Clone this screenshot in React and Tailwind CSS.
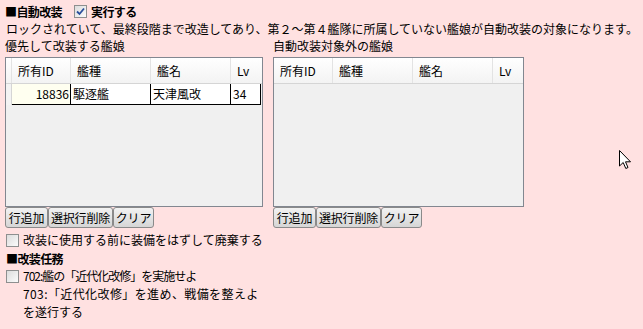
// App.jsx
// 自動改装 settings panel

import React from "react";

const FONT = {
    fontFamily: '"Noto Sans CJK JP", "Noto Sans", sans-serif',
};

// Checkbox styled like the old Windows one
const CheckBox = ({ checked }) => (
    <div className="w-[13px] h-[13px] border border-[#8e8f8f] bg-gradient-to-br from-[#dcdcdc] to-[#fbfbfb] flex items-center justify-center shrink-0">
        {checked && (
            <svg width="9" height="9" viewBox="0 0 9 9">
                <path
                    d="M1 4.5 L3.5 7 L8 1.5"
                    fill="none"
                    stroke="#2a4f9c"
                    strokeWidth="1.8"
                />
            </svg>
        )}
    </div>
);

const Btn = ({ children, w }) => (
    <button
        className={`${w} h-[21px] border border-[#8a8a8a] rounded-[3px] bg-gradient-to-b from-[#f2f2f2] to-[#d6d6d6] text-[12px] leading-none text-black flex items-center justify-center whitespace-nowrap tracking-[-0.2px]`}
    >
        {children}
    </button>
);

const HeaderCell = ({ children, w, last }) => (
    <div
        className={`h-full flex items-center pl-[6px] ${last ? "" : "border-r border-[#e3e3e3]"} ${w}`}
    >
        {children}
    </div>
);

// Data grid with header row and optional rows
const Grid = ({ rows, width, rowHeader }) => (
    <div
        className={`${width} h-[150px] border border-[#828790] bg-[#f0f0f0] flex flex-col`}
    >
        <div className="h-[26px] flex bg-gradient-to-b from-[#ffffff] to-[#f3f3f3] border-b border-[#d5d5d5] text-[12px]">
            {rowHeader && (
                <div className="w-[6px] h-full border-r border-[#e3e3e3]" />
            )}
            <HeaderCell w="w-[59px]">所有ID</HeaderCell>
            <HeaderCell w="w-[80px]">艦種</HeaderCell>
            <HeaderCell w="w-[80px]">艦名</HeaderCell>
            <HeaderCell w="flex-1" last>
                Lv
            </HeaderCell>
        </div>
        {rows.map((r) => (
            <div key={r.id} className="h-[21px] flex text-[12px]">
                <div className="w-[6px] h-full bg-[#f3f3f3] border-r border-[#d5d5d5]" />
                <div className="w-[59px] h-full bg-[#fffff0] border-b border-r border-black flex items-center justify-end pr-[1px]">
                    {r.id}
                </div>
                <div className="w-[80px] h-full bg-white border-b border-r border-black flex items-center pl-[2px]">
                    {r.type}
                </div>
                <div className="w-[80px] h-full bg-white border-b border-r border-black flex items-center pl-[2px]">
                    {r.name}
                </div>
                <div className="w-[30px] h-full bg-white border-b border-r border-black flex items-center pl-[2px]">
                    {r.lv}
                </div>
            </div>
        ))}
    </div>
);

const Buttons = () => (
    <div className="flex">
        <Btn w="w-[43px]">行追加</Btn>
        <Btn w="w-[65px]">選択行削除</Btn>
        <Btn w="w-[41px]">クリア</Btn>
    </div>
);

export default function App() {
    return (
        <div
            className="relative w-[643px] h-[329px] bg-[#ffe1e1] text-black text-[12px] pl-[5px] overflow-hidden"
            style={FONT}
        >
            {/* Title row */}
            <div className="h-[20px] flex items-center font-bold tracking-[-0.6px] pt-[3px]">
                <span>■自動改装</span>
                <div className="ml-[12px] mr-[4px]">
                    <CheckBox checked />
                </div>
                <span>実行する</span>
            </div>

            {/* Description */}
            <div className="h-[17px] leading-[17px] whitespace-nowrap pl-[1px]">
                ロックされていて、最終段階まで改造してあり、第２～第４艦隊に所属していない艦娘が自動改装の対象になります。
            </div>

            {/* Two grids */}
            <div className="flex gap-[10px] mt-[1px]">
                <div className="flex flex-col">
                    <div className="h-[19px] leading-[16px]">
                        優先して改装する艦娘
                    </div>
                    <Grid
                        width="w-[258px]"
                        rowHeader
                        rows={[
                            {
                                id: "18836",
                                type: "駆逐艦",
                                name: "天津風改",
                                lv: "34",
                            },
                        ]}
                    />
                    <Buttons />
                </div>
                <div className="flex flex-col">
                    <div className="h-[19px] leading-[16px]">
                        自動改装対象外の艦娘
                    </div>
                    <Grid width="w-[251px]" rows={[]} />
                    <Buttons />
                </div>
            </div>

            {/* Options */}
            <div className="h-[20px] mt-[2px] flex items-center gap-[4px] pl-[1px]">
                <CheckBox />
                <span>改装に使用する前に装備をはずして廃棄する</span>
            </div>
            <div className="h-[17px] flex items-center font-bold tracking-[-0.6px] pl-[1px]">
                ■改装任務
            </div>
            <div className="flex gap-[4px] pl-[1px]">
                <div className="pt-[3px]">
                    <CheckBox />
                </div>
                <div className="leading-[18px]">
                    <div className="tracking-[-1px]">
                        702:艦の「近代化改修」を実施せよ
                    </div>
                    <div className="tracking-[0.4px]">
                        703:「近代化改修」を進め、戦備を整えよ
                    </div>
                    <div>を遂行する</div>
                </div>
            </div>

            {/* Mouse cursor */}
            <svg
                className="absolute left-[619px] top-[150px]"
                width="13"
                height="20"
                viewBox="0 0 13 20"
            >
                <path
                    d="M0.5 0.5 L0.5 16 L4.2 12.5 L6.8 18.5 L9 17.5 L6.5 11.8 L11.5 11.8 Z"
                    fill="white"
                    stroke="black"
                    strokeWidth="1"
                />
            </svg>
        </div>
    );
}
